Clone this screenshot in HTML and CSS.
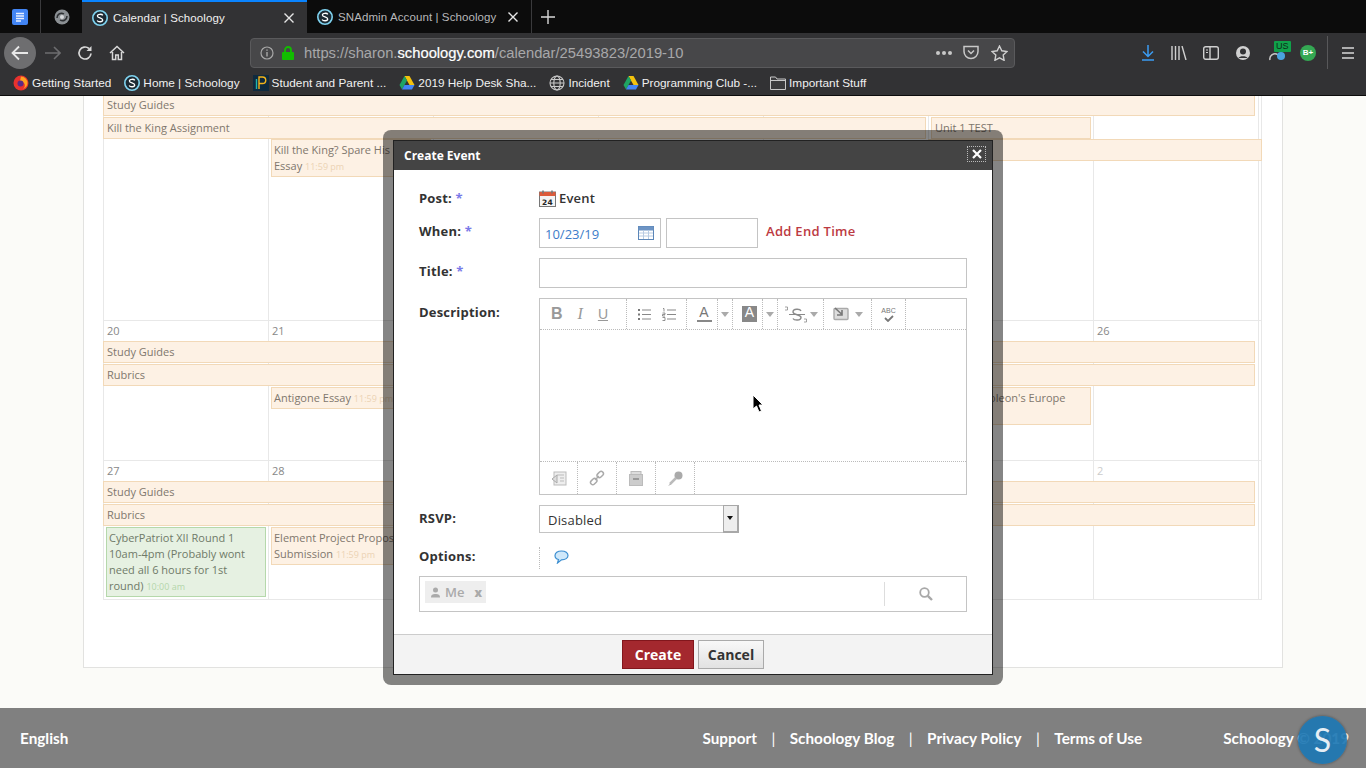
FILE: index.html
```html
<!DOCTYPE html>
<html lang="en">
<head>
  <meta charset="UTF-8" />
  <title>Calendar | Schoology</title>
  <link rel="stylesheet" href="styles.css">
</head>
<body>
  <svg class="defs" width="0" height="0">
    <symbol id="s-logo" viewBox="0 0 16 16">
      <circle cx="8" cy="8" r="7.2" fill="#1c2a33" stroke="#7fd3f0" stroke-width="1.6"/>
      <path d="M10.800 5.400C10 3.800 5.400 3.800 5.400 6c0 2.400 5.300 1.500 5.300 4 0 2.300-4.700 2.200-5.500.5" fill="none" stroke="#fff" stroke-width="1.300"/>
    </symbol>
    <symbol id="drive" viewBox="0 0 16 16">
      <path d="M5.500 1h5l5 9h-5z" fill="#f4c20d"/>
      <path d="M5.500 1L.5 10l2.500 4.500L8 5.500z" fill="#1fa463"/>
      <path d="M3 14.500h10l2.500-4.500h-10z" fill="#4285f4"/>
    </symbol>
  </svg>

  <!-- browser chrome -->
  <header class="chrome">
    <div class="tabs">
      <div class="pin pin-docs">
        <svg width="16" height="16" viewBox="0 0 16 16"><rect width="16" height="16" rx="2" fill="#4285f4"/><path d="M4 4.500h8M4 7h8M4 9.500h8M4 12h5" stroke="#e8f0fe" stroke-width="1.300"/></svg>
      </div>
      <div class="pin pin-swirl">
        <svg width="16" height="16" viewBox="0 0 16 16"><circle cx="8" cy="8" r="7.500" fill="#8b9094"/><path d="M3 9c0-4 4-6 7-4M13 7c0 4-4 6-7 4" fill="none" stroke="#2d3033" stroke-width="1.500"/><circle cx="8" cy="8" r="2" fill="#d7dadc"/></svg>
      </div>
      <div class="tab tab-active">
        <svg class="fav" width="16" height="16"><use href="#s-logo"/></svg>
        <span class="tab-title">Calendar | Schoology</span>
        <svg class="tab-x" width="10" height="10" viewBox="0 0 10 10"><path d="M.5.500l9 9M9.500.500l-9 9" stroke="#e6e6e6" stroke-width="1.400"/></svg>
      </div>
      <div class="tab">
        <svg class="fav" width="16" height="16"><use href="#s-logo"/></svg>
        <span class="tab-title">SNAdmin Account | Schoology</span>
        <svg class="tab-x" width="10" height="10" viewBox="0 0 10 10"><path d="M.5.500l9 9M9.500.500l-9 9" stroke="#e6e6e6" stroke-width="1.400"/></svg>
      </div>
      <div class="new-tab">
        <svg width="14" height="14" viewBox="0 0 14 14"><path d="M7 0v14M0 7h14" stroke="#d8d8d8" stroke-width="1.400"/></svg>
      </div>
    </div>

    <div class="nav">
      <div class="back">
        <svg width="18" height="16" viewBox="0 0 18 16"><path d="M17 8H2M8 1.500L1.500 8 8 14.500" fill="none" stroke="#e8e8e8" stroke-width="1.800"/></svg>
      </div>
      <svg class="forward" width="16" height="14" viewBox="0 0 16 14"><path d="M0 7h15M9 1l6 6-6 6" fill="none" stroke="#6d6d6f" stroke-width="1.600"/></svg>
      <svg class="reload" width="16" height="16" viewBox="0 0 16 16"><path d="M14 8.500A6 6 0 1 1 12 3.500" fill="none" stroke="#d8d8d8" stroke-width="1.700"/><path d="M14.500 1v5h-5z" fill="#d8d8d8"/></svg>
      <svg class="home" width="16" height="16" viewBox="0 0 16 16"><path d="M1 8l7-6.500L15 8M3.500 7v7.500h3.200v-4.500h2.600v4.500h3.200V7" fill="none" stroke="#d8d8d8" stroke-width="1.500"/></svg>
      <div class="urlbar">
        <svg class="info" width="14" height="14" viewBox="0 0 14 14"><circle cx="7" cy="7" r="6" fill="none" stroke="#a8a8a8" stroke-width="1.200"/><path d="M7 6v4.500M7 3.500v1.300" stroke="#a8a8a8" stroke-width="1.400"/></svg>
        <svg class="lock" width="12" height="14" viewBox="0 0 12 14"><path d="M3 6V4a3 3 0 0 1 6 0v2" fill="none" stroke="#12bc00" stroke-width="1.800"/><rect y="6" width="12" height="8" rx="1" fill="#12bc00"/></svg>
        <span class="url">https://sharon.<b>schoology.com</b>/calendar/25493823/2019-10</span>
        <span class="url-dots"><i></i><i></i><i></i></span>
        <svg class="pocket" width="16" height="15" viewBox="0 0 16 15"><path d="M1 1.500h14v5a7 7 0 0 1-14 0z" fill="none" stroke="#c8c8c8" stroke-width="1.500"/><path d="M5 5.500l3 3 3-3" fill="none" stroke="#c8c8c8" stroke-width="1.500"/></svg>
        <svg class="star" width="17" height="16" viewBox="0 0 17 16"><path d="M8.500 1l2.300 4.800 5.200.7-3.800 3.600.9 5.200-4.600-2.500-4.600 2.500.9-5.200L1 6.500l5.200-.7z" fill="none" stroke="#d0d0d0" stroke-width="1.400"/></svg>
      </div>
      <div class="nav-tools">
        <svg class="tool-dl" width="14" height="16" viewBox="0 0 14 16"><path d="M7 0v11M2 6.500L7 11.500 12 6.500M1 15h12" fill="none" stroke="#3b9cf2" stroke-width="1.500"/></svg>
        <svg class="tool" width="16" height="14" viewBox="0 0 16 14"><path d="M1 0v14M4.500 0v14M8 0v14M11 0l4 14" stroke="#d0d0d0" stroke-width="1.400" fill="none"/></svg>
        <svg class="tool" width="16" height="14" viewBox="0 0 16 14"><rect x=".7" y=".7" width="14.600" height="12.600" rx="2" fill="none" stroke="#d0d0d0" stroke-width="1.400"/><path d="M7 1v12" stroke="#d0d0d0" stroke-width="1.400"/><path d="M3 4h2M3 6.500h2" stroke="#d0d0d0"/></svg>
        <svg class="tool" width="16" height="16" viewBox="0 0 16 16"><circle cx="8" cy="8" r="7" fill="#d0d0d0"/><circle cx="8" cy="6.500" r="3" fill="#323234"/><path d="M3.500 13c1-2.500 8-2.500 9 0" fill="#323234"/></svg>
        <div class="tool-ext">
          <svg width="18" height="12" viewBox="0 0 18 12"><path d="M1 11a5 5 0 0 1 8-5" fill="none" stroke="#c8c8c8" stroke-width="1.500"/><circle cx="12" cy="7" r="4" fill="#4aa3df"/></svg>
          <span class="ext-badge">US</span>
        </div>
        <span class="tool-grade">B+</span>
        <span class="tool-sep"></span>
        <svg class="tool-menu" width="14" height="12" viewBox="0 0 14 12"><path d="M1 1h12M1 6h12M1 11h12" stroke="#d8d8d8" stroke-width="1.600"/></svg>
      </div>
    </div>

    <div class="bookmarks">
      <span class="mark">
        <svg width="16" height="16" viewBox="0 0 16 16"><circle cx="8" cy="8" r="7.500" fill="#e8322e"/><path d="M8 1.500a6.500 6.500 0 0 1 6.500 6.500c0 3-2 5-4.500 6 2-1.500 2.500-4 1-6-1-1.300-3-1.300-4-.5 0-2 .5-4 1-6z" fill="#ffa21f"/><circle cx="7.500" cy="8.500" r="3" fill="#5b2a86"/></svg>
        Getting Started
      </span>
      <span class="mark"><svg width="16" height="16"><use href="#s-logo"/></svg>Home | Schoology</span>
      <span class="mark">
        <svg width="16" height="16" viewBox="0 0 16 16"><rect width="16" height="16" fill="#0f2a3f"/><path d="M6 14V2h3.500a3 3 0 0 1 0 6.500H6" fill="none" stroke="#f4b41a" stroke-width="1.400"/><path d="M3.500 14V4" stroke="#1fb5ad" stroke-width="1.400"/></svg>
        Student and Parent ...
      </span>
      <span class="mark"><svg width="16" height="16"><use href="#drive"/></svg>2019 Help Desk Sha...</span>
      <span class="mark">
        <svg width="16" height="16" viewBox="0 0 16 16"><g fill="none" stroke="#c8c8c8" stroke-width="1.100"><circle cx="8" cy="8" r="7"/><ellipse cx="8" cy="8" rx="3.200" ry="7"/><path d="M1 8h14M2 4.500h12M2 11.500h12"/></g></svg>
        Incident
      </span>
      <span class="mark"><svg width="16" height="16"><use href="#drive"/></svg>Programming Club -...</span>
      <span class="mark">
        <svg width="16" height="16" viewBox="0 0 16 16"><path d="M.5 14.500V2h5l1.500 2h8.500v10.500z" fill="#3b3b3d" stroke="#c8c8c8"/><path d="M.5 5.500h15" stroke="#c8c8c8"/></svg>
        Important Stuff
      </span>
    </div>
  </header>

  <!-- calendar page -->
  <main class="page">
    <section class="sheet">
      <div class="week week-first">
        <div class="ev bar full">Study Guides</div>
        <div class="ev bar span5">Kill the King Assignment</div>
        <div class="ev bar col6 inset">Unit 1 TEST</div>
        <div class="ev bar col6to7"></div>
        <div class="ev item col2 overlap">Kill the King? Spare His<br>Essay <span class="time">11:59 pm</span></div>
      </div>
      <div class="week week-mid">
        <div class="num">20</div><div class="num">21</div><div class="num"></div><div class="num"></div><div class="num"></div><div class="num"></div><div class="num">26</div>
        <div class="ev bar full">Study Guides</div>
        <div class="ev bar full">Rubrics</div>
        <div class="ev item col2">Antigone Essay <span class="time">11:59 pm</span></div>
        <div class="ev item col6 tall">Napoleon's Europe</div>
      </div>
      <div class="week week-last">
        <div class="num">27</div><div class="num">28</div><div class="num"></div><div class="num"></div><div class="num"></div><div class="num"></div><div class="num num-off">2</div>
        <div class="ev bar full">Study Guides</div>
        <div class="ev bar full">Rubrics</div>
        <div class="ev item green">CyberPatriot XII Round 1<br>10am-4pm (Probably wont<br>need all 6 hours for 1st<br>round) <span class="time">10:00 am</span></div>
        <div class="ev item col2 sub">Element Project Proposal<br>Submission <span class="time">11:59 pm</span></div>
      </div>
    </section>
  </main>

  <footer class="foot">
    <span>English</span>
    <nav class="foot-links">
      <span>Support</span><i>|</i><span>Schoology Blog</span><i>|</i><span>Privacy Policy</span><i>|</i><span>Terms of Use</span>
    </nav>
    <span>Schoology © 2019</span>
  </footer>
  <div class="s-badge">S</div>

  <!-- create event popup -->
  <div class="halo">
    <div class="modal">
      <div class="modal-head">
        <span>Create Event</span>
        <span class="modal-x">
          <svg width="10" height="10" viewBox="0 0 10 10"><path d="M1 1l8 8M9 1l-8 8" stroke="#fff" stroke-width="2.200"/></svg>
        </span>
      </div>
      <form class="modal-body">
        <label class="lbl lbl-post">Post: <em>*</em></label>
        <div class="post-type">
          <svg width="17" height="17" viewBox="0 0 17 17"><rect x=".5" y="2" width="16" height="14.500" fill="#f4f4f4" stroke="#777"/><rect x=".5" y="2" width="16" height="4" fill="#dd5b3a"/><path d="M4 .5v3M13 .5v3" stroke="#777" stroke-width="1.600"/><text x="8.500" y="14.500" text-anchor="middle" font-family="DejaVu Sans, sans-serif" font-size="7.500" fill="#222">24</text></svg>
          Event
        </div>

        <label class="lbl">When: <em>*</em></label>
        <div class="when">
          <div class="input date">10/23/19
            <svg width="16" height="14" viewBox="0 0 16 14"><rect x=".5" y=".5" width="15" height="13" fill="#fff" stroke="#5b86b8"/><rect x=".5" y=".5" width="15" height="4" fill="#6d94c4"/><path d="M1 7h14M1 10h14M5.500 5v8M10.500 5v8" stroke="#b8cbe2"/></svg>
          </div>
          <div class="input time-in"></div>
          <a class="end-time">Add End Time</a>
        </div>

        <label class="lbl">Title: <em>*</em></label>
        <div class="input title-in"></div>

        <label class="lbl lbl-desc">Description:</label>
        <div class="editor">
          <div class="ed-top">
            <div class="ed-group g-format">
              <span class="b">B</span><span class="i">I</span><span class="u">U</span>
            </div>
            <div class="ed-group g-list">
              <svg width="14" height="13" viewBox="0 0 14 13"><path d="M5 2h9M5 6.500h9M5 11h9" stroke="#888" stroke-width="1.200"/><path d="M1 2h2M1 6.500h2M1 11h2" stroke="#777" stroke-width="2"/></svg>
              <svg width="14" height="13" viewBox="0 0 14 13"><path d="M5 2h9M5 6.500h9M5 11h9" stroke="#888" stroke-width="1.200"/><path d="M1 .5h1v3M.5 5h2.500v1.500H.5V8H3M.5 9.500H3v3H.5" fill="none" stroke="#777" stroke-width=".8"/></svg>
            </div>
            <div class="ed-group g-a">
              <span class="u-a">A</span>
            </div>
            <div class="ed-group g-drop"><i class="caret"></i></div>
            <div class="ed-group g-a">
              <span class="u-a u-fill">A</span>
            </div>
            <div class="ed-group g-drop"><i class="caret"></i></div>
            <div class="ed-group g-sub">
              <svg width="24" height="17" viewBox="0 0 24 17"><path d="M17 5c-1-2.500-8-2.500-8 1s8 2 8 5.500-7 3-8 1" fill="none" stroke="#8a8a8a" stroke-width="1.400"/><path d="M5 8.500h16" stroke="#8a8a8a"/><path d="M1 1h2.500v3H1M20 13h2.500v3H20" fill="none" stroke="#8a8a8a" stroke-width=".8"/></svg>
              <i class="caret"></i>
            </div>
            <div class="ed-group g-img">
              <svg width="16" height="14" viewBox="0 0 16 14"><rect x="1" y="1.500" width="14" height="11" rx="1" fill="#ddd" stroke="#aaa" stroke-width="1.400"/><path d="M2 1l7 6.500M9 3v5H4" fill="none" stroke="#777" stroke-width="1.600"/></svg>
              <i class="caret"></i>
            </div>
            <div class="ed-group g-spell">
              <span>ABC</span>
              <svg width="10" height="7" viewBox="0 0 10 7"><path d="M1 3l3 3 5-5" fill="none" stroke="#777" stroke-width="1.800"/></svg>
            </div>
          </div>
          <div class="ed-area"></div>
          <div class="ed-bottom">
            <div class="ed-cell">
              <svg width="16" height="15" viewBox="0 0 16 15"><rect x="3" y="1" width="12" height="13" fill="#eee" stroke="#bbb"/><path d="M6 4h7M9 7h4M9 10h4" stroke="#bbb"/><path d="M6 4L1 8l5 4z" fill="#ddd" stroke="#aaa"/></svg>
            </div>
            <div class="ed-cell">
              <svg width="16" height="16" viewBox="0 0 16 16"><g fill="none" stroke="#aaa" stroke-width="1.500"><rect x="9" y="1" width="4.500" height="7" rx="2.200" transform="rotate(45 11.200 4.500)"/><rect x="2.500" y="8" width="4.500" height="7" rx="2.200" transform="rotate(45 4.700 11.500)"/></g><path d="M6 10l4-4" stroke="#aaa" stroke-width="1.500"/></svg>
            </div>
            <div class="ed-cell">
              <svg width="14" height="15" viewBox="0 0 14 15"><rect x="2" y=".5" width="10" height="4" fill="#ddd" stroke="#bbb"/><rect x=".5" y="3.500" width="13" height="11" fill="#ccc" stroke="#bbb"/><path d="M4 8h6" stroke="#888" stroke-width="1.500"/></svg>
            </div>
            <div class="ed-cell">
              <svg width="15" height="15" viewBox="0 0 15 15"><circle cx="10.500" cy="4.500" r="4" fill="#aaa"/><path d="M8 7L2 13" stroke="#bbb" stroke-width="2.500"/><path d="M1 14.500l1.500-1.500" stroke="#999"/></svg>
            </div>
          </div>
        </div>

        <label class="lbl">RSVP:</label>
        <div class="select">
          <span>Disabled</span>
          <span class="sel-btn"></span>
        </div>

        <label class="lbl lbl-opt">Options:</label>
        <div class="options">
          <svg width="15" height="14" viewBox="0 0 15 14"><path d="M7.500 1C3.500 1 1 3 1 5.500c0 2 1.500 3.500 3.500 4L3.500 13l4-3.200c4 0 6.500-2 6.500-4.300C14 3 11.500 1 7.500 1z" fill="#cfe8fa" stroke="#3d8fd1" stroke-width="1.200"/></svg>
        </div>

        <div class="people">
          <span class="tag">
            <svg width="9" height="11" viewBox="0 0 9 11"><circle cx="4.500" cy="3" r="2.500" fill="#aaa"/><path d="M0 10.500c0-3 2-3.500 4.500-3.500s4.500.5 4.500 3.500z" fill="#aaa"/></svg>
            <span>Me</span>
            <b>x</b>
          </span>
          <span class="search">
            <svg width="14" height="14" viewBox="0 0 14 14"><circle cx="5.500" cy="5.500" r="4.300" fill="none" stroke="#a8a8a8" stroke-width="1.800"/><path d="M8.800 8.800L13 13" stroke="#a8a8a8" stroke-width="2.400"/></svg>
          </span>
        </div>
      </form>
      <div class="modal-foot">
        <button class="btn btn-create" type="button">Create</button>
        <button class="btn btn-cancel" type="button">Cancel</button>
      </div>
    </div>
  </div>

  <svg class="cursor" width="12" height="19" viewBox="0 0 12 19"><path d="M1 1v14l3.500-3 2.500 6 2.500-1-2.500-6H11z" fill="#000" stroke="#fff"/></svg>
</body>
</html>
```

FILE: styles.css
```css
* { box-sizing: border-box; margin: 0; padding: 0; }
html, body { height: 768px; overflow: hidden; }
body {
  display: flex;
  flex-direction: column;
  position: relative;
  background: #fbfbf8;
  font-family: "Open Sans", "Liberation Sans", sans-serif;
}
.defs { position: absolute; }

/* ====== browser chrome ====== */
.chrome {
  position: relative;
  z-index: 1;
  flex: none;
  height: 96px;
  background: #323234;
  border-bottom: 1px solid #0c0c0c;
  color: #e8e8e8;
  font-family: "Liberation Sans", sans-serif;
}
.tabs { display: flex; height: 33px; background: #0c0c0c; }
.pin {
  display: flex;
  align-items: center;
  justify-content: center;
  width: 41px;
  padding-top: 1px;
  border-right: 1px solid #3a3a3c;
}
.pin-docs { padding-right: 1px; }
.tab {
  display: flex;
  align-items: center;
  width: 225px;
  padding: 0 13px 0 10px;
  font-size: 11.500px;
  color: #b8b8ba;
}
.pin-swirl { border-right: none; }
.tab-active {
  background: #323234;
  border-top: 2px solid #0a84ff;
  color: #f0f0f0;
}
.tab + .tab { border-right: 1px solid #3a3a3c; padding-right: 13px; }
.fav { flex: none; margin-right: 5px; }
.tab-title { flex: 1; white-space: nowrap; letter-spacing: .1px; }
.new-tab { display: flex; align-items: center; padding-left: 9px; }

.nav { display: flex; align-items: center; height: 39px; padding-left: 4px; }
.back {
  display: flex;
  align-items: center;
  justify-content: center;
  width: 32px;
  height: 32px;
  border-radius: 50%;
  background: #6e6e70;
}
.forward { margin-left: 9px; }
.reload { margin-left: 16px; }
.home { margin-left: 16px; }
.urlbar {
  display: flex;
  align-items: center;
  width: 765px;
  height: 30px;
  margin-left: 125px;
  padding: 0 6px 0 9px;
  background: #474749;
  border: 1px solid #5a5a5c;
  border-radius: 4px;
}
.urlbar .lock { margin-left: 8px; }
.url { margin-left: 10px; flex: 1; font-size: 14.750px; color: #a8a8aa; white-space: nowrap; }
.url b { font-weight: 400; color: #fff; -webkit-text-stroke: .2px #fff; }
.url-dots { display: flex; gap: 2px; }
.url-dots i { width: 4px; height: 4px; border-radius: 50%; background: #c8c8c8; }
.pocket { margin-left: 11px; }
.star { margin-left: 12px; }
.nav-tools { display: flex; align-items: center; height: 30px; margin-left: 126px; }
.tool { margin-left: 16px; }
.tool-ext { position: relative; display: flex; margin-left: 18px; padding-top: 4px; }
.ext-badge {
  position: absolute;
  top: -4px;
  left: 5px;
  padding: 0 2px;
  background: #10a14a;
  border-radius: 1px;
  font-size: 9px;
  line-height: 11px;
  color: #0d2a18;
}
.tool-grade {
  width: 16px;
  height: 16px;
  margin-left: 13px;
  border-radius: 50%;
  background: #34a853;
  font-size: 8px;
  font-weight: 700;
  line-height: 16px;
  text-align: center;
  color: #fff;
}
.tool-sep { width: 1px; height: 33px; margin-left: 11px; background: #58585a; }
.tool-menu { margin-left: 13px; }

.bookmarks {
  display: flex;
  align-items: center;
  gap: 13px;
  height: 23px;
  padding: 0 0 1px 13px;
  font-size: 11.800px;
  color: #f0f0f0;
}
.mark { display: flex; align-items: center; gap: 3px; white-space: nowrap; }

/* ====== calendar page ====== */
.page { flex: none; height: 612px; }
.sheet {
  display: flow-root;
  width: 1200px;
  height: 572px;
  margin-left: 83px;
  padding: 0 0 0 19px;
  background: #fff;
  border: 1px solid #e2e2e0;
  border-top: none;
}
.week {
  display: grid;
  grid-template-columns: repeat(6, 165px) 168px;
  align-content: start;
  width: 1159px;
  background: repeating-linear-gradient(90deg, #e8e8e8 0 1px, transparent 1px 165px);
  border-right: 1px solid #e8e8e8;
  border-top: 1px solid #e8e8e8;
  font-size: 11px;
}
.week-first { height: 227px; margin-top: -3px; }
.week-mid { height: 140px; }
.week-last { height: 140px; border-bottom: 1px solid #e8e8e8; }
.num { height: 20px; padding: 2px 0 0 4px; line-height: 15px; color: #888; }
.num-off { color: #ccc; }
.ev {
  background: #fdf1e4;
  border: 1px solid #f2d9b8;
  color: #7f776d;
  font-size: 11px;
}
.bar { height: 22px; margin-bottom: 1px; padding: 0 3px; line-height: 20px; white-space: nowrap; overflow: hidden; }
.full { grid-column: 1 / 8; width: 1152px; }
.span5 { grid-column: 1 / 6; width: 823px; }
.col6 { grid-column: 6; }
.inset { grid-column: 6; grid-row: 2; width: 160px; margin-left: 3px; }
.col6to7 { grid-column: 6 / 8; grid-row: 3; margin-top: -1px; width: 334px; }
.item { width: 160px; margin-left: 3px; padding: 2px 2px; line-height: 16px; }
.col2 { grid-column: 2; }
.overlap { grid-row: 3; height: 38px; margin-top: -1px; overflow: hidden; white-space: nowrap; }
.week-mid .col2, .week-mid .col6 { grid-row: 4; }
.week-mid .item { height: 22px; white-space: nowrap; overflow: hidden; }
.week-mid .tall { height: 38px; padding-left: 36px; }
.week-last .item { grid-row: 4; }
.green {
  grid-column: 1;
  height: 70px;
  background: #e6f1e2;
  border-color: #b5d8ab;
  color: #6f7a68;
}
.sub { height: 38px; white-space: nowrap; overflow: hidden; }
.time { font-size: 9px; color: #ecd3b4; }
.green .time { color: #b4d6aa; }

/* ====== footer ====== */
.foot {
  display: flex;
  align-items: center;
  flex: none;
  height: 60px;
  padding: 0 17px 1px 20px;
  background: #808080;
  font-family: Lato, "Liberation Sans", sans-serif;
  font-size: 15.300px;
  font-weight: 700;
  color: #fff;
}
.foot-links { display: flex; gap: 14.500px; margin: 0 81px 0 auto; }
.foot-links i { font-style: normal; font-weight: 400; }
.s-badge {
  position: absolute;
  left: 1298px;
  top: 716px;
  width: 49px;
  height: 48px;
  border-radius: 50%;
  background: rgba(29, 119, 179, .92);
  box-shadow: 0 0 3px rgba(0, 0, 0, .4);
  font-family: Lato, sans-serif;
  font-size: 32px;
  line-height: 48px;
  text-align: center;
  color: #e6eef4;
}

/* ====== create event popup ====== */
.halo {
  position: absolute;
  left: 383px;
  top: 130px;
  width: 620px;
  height: 555px;
  padding: 10px;
  background: rgba(0, 0, 0, .48);
  border-radius: 8px;
}
.modal {
  display: flex;
  flex-direction: column;
  height: 535px;
  background: #fff;
  border: 1px solid #222;
}
.modal-head {
  display: flex;
  align-items: center;
  justify-content: space-between;
  flex: none;
  height: 29px;
  padding: 0 6px 0 10px;
  background: #444;
  font-size: 12px;
  font-weight: 700;
  color: #fff;
}
.modal-x {
  display: flex;
  align-items: center;
  justify-content: center;
  width: 19px;
  height: 16px;
  margin-top: -3px;
  border: 1px dotted #bbb;
}
.modal-body {
  display: grid;
  grid-template-columns: 120px 428px;
  grid-template-rows: 20px 30px 30px 197px 28px 26px 36px;
  row-gap: 10px;
  flex: 1;
  padding: 18px 0 0 25px;
  font-size: 13px;
  color: #333;
}
.lbl { padding-top: 3px; font-weight: 700; line-height: 20px; letter-spacing: .2px; }
.lbl em { font-style: normal; color: #7a7ae8; }
.lbl-post { padding-top: 0; }
.lbl-desc { padding-top: 4px; }
.lbl-opt { margin-top: 3px; padding-top: 0; }
.post-type { display: flex; align-items: center; gap: 3px; font-weight: 600; letter-spacing: .2px; }
.when { display: flex; align-items: stretch; gap: 5px; }
.input { height: 30px; background: #fff; border: 1px solid #c4c4c4; }
.date {
  display: flex;
  align-items: center;
  justify-content: space-between;
  width: 122px;
  padding: 2px 6px 0 5px;
  color: #3d7cc9;
}
.date svg { margin-top: -2px; }
.time-in { width: 92px; }
.end-time {
  align-self: center;
  margin: -4px 0 0 3px;
  font-weight: 600;
  letter-spacing: .3px;
  color: #bc3a42;
}
.title-in { width: 428px; }

.editor { display: flex; flex-direction: column; width: 428px; border: 1px solid #c4c4c4; }
.ed-top { display: flex; flex: none; height: 31px; border-bottom: 1px dotted #bbb; color: #999; }
.ed-group {
  display: flex;
  align-items: center;
  justify-content: center;
  flex: none;
  border-right: 1px dotted #bbb;
}
.g-format {
  justify-content: flex-start;
  gap: 15px;
  width: 87px;
  padding-left: 11px;
  font-size: 14px;
  font-family: "Liberation Sans", sans-serif;
}
.g-format .b { font-weight: 700; font-size: 16px; color: #999; }
.g-format .i { font-style: italic; font-family: "Liberation Serif", serif; font-size: 16px; }
.g-format .u { text-decoration: underline; }
.g-list { width: 60px; gap: 11px; }
.g-a { width: 31px; padding-left: 4px; font-family: "Liberation Sans", sans-serif; }
.g-a + .g-drop + .g-a { width: 30px; }
.u-a {
  display: block;
  width: 15px;
  padding-bottom: 1px;
  border-bottom: 2px solid #888;
  font-size: 14px;
  line-height: 13px;
  text-align: center;
  color: #777;
}
.u-fill { background: #888; color: #fff; }
.g-drop { width: 15px; }
.caret {
  display: block;
  border: 4px solid transparent;
  border-top: 5px solid #aaa;
  border-bottom: none;
}
.g-sub { width: 46px; gap: 2px; }
.g-img { width: 48px; gap: 6px; }
.g-spell {
  flex-direction: column;
  width: 34px;
  font-family: "Liberation Sans", sans-serif;
  font-size: 7px;
  line-height: 8px;
  color: #777;
}
.ed-area { flex: 1; }
.ed-bottom { display: flex; flex: none; height: 33px; border-top: 1px dotted #bbb; }
.ed-cell {
  display: flex;
  align-items: center;
  justify-content: center;
  width: 39px;
  border-right: 1px dotted #bbb;
}
.ed-cell:first-child { width: 38px; }

.select {
  display: flex;
  align-items: center;
  justify-content: space-between;
  width: 200px;
  padding: 2px 0 0 8px;
  border: 1px solid #c4c4c4;
  border-right: none;
  letter-spacing: .2px;
  position: relative;
}
.sel-btn {
  position: absolute;
  right: 0;
  top: -1px;
  width: 16px;
  height: 28px;
  background: #eee;
  border: 1px solid #a8a8a8;
  border-width: 1px 2px 2px 1px;
}
.sel-btn::after {
  content: "";
  position: absolute;
  left: 3px;
  top: 10px;
  border: 3px solid transparent;
  border-top: 4px solid #111;
  border-bottom: none;
}
.options {
  display: flex;
  align-items: center;
  margin-top: 4px;
  padding: 0 0 2px 14px;
  border-left: 1px dotted #bbb;
}
.people {
  grid-column: 1 / 3;
  display: flex;
  align-items: center;
  justify-content: space-between;
  width: 548px;
  height: 36px;
  margin-top: -3px;
  padding-left: 5px;
  border: 1px solid #c4c4c4;
}
.tag {
  display: flex;
  align-items: center;
  align-self: flex-start;
  width: 61px;
  height: 22px;
  margin-top: 4px;
  padding-left: 6px;
  background: #eee;
  font-weight: 600;
  color: #aaa;
}
.tag span { margin-left: 5px; flex: 1; }
.tag b { margin-right: 4px; font-size: 12px; }
.search {
  display: flex;
  align-items: center;
  justify-content: center;
  width: 82px;
  height: 24px;
  border-left: 1px solid #ddd;
}
.modal-foot {
  display: flex;
  justify-content: center;
  gap: 4px;
  flex: none;
  height: 40px;
  padding-top: 5px;
  background: #f3f3f3;
  border-top: 1px solid #ccc;
}
.btn {
  height: 29px;
  font-family: inherit;
  font-size: 14px;
  font-weight: 700;
}
.btn-create { width: 72px; background: #a4282e; border: 1px solid #82161c; color: #fff; }
.btn-cancel {
  width: 66px;
  background: linear-gradient(#f8f8f8, #e2e2e2);
  border: 1px solid #aaa;
  color: #333;
}
.cursor { position: absolute; left: 752px; top: 394px; }
```
